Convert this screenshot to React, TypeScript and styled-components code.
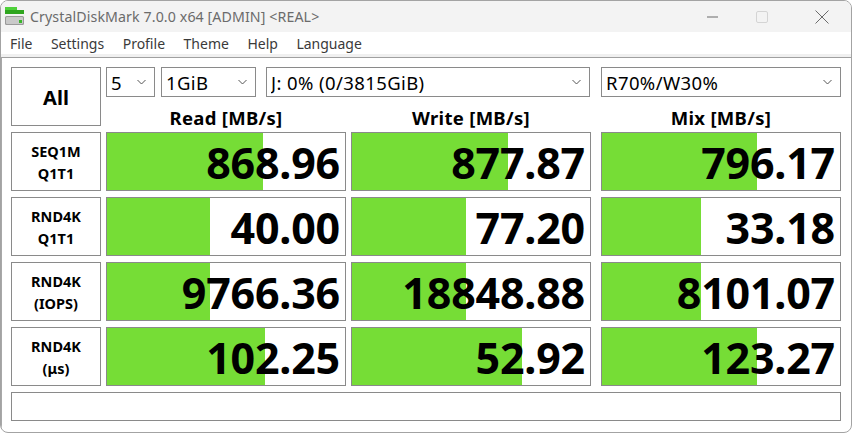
import React from 'react';
import styled, { createGlobalStyle } from 'styled-components';

const GlobalStyle = createGlobalStyle`
  html, body {
    margin: 0;
    padding: 0;
    background: #ffffff;
  }
  * {
    box-sizing: border-box;
  }
`;

const Window = styled.div`
  width: 852px;
  height: 433px;
  border: 1px solid #a3a3a3;
  border-radius: 8px;
  overflow: hidden;
  background: #ffffff;
  display: flex;
  flex-direction: column;
  font-family: 'Noto Sans', 'Open Sans', sans-serif;
`;

const TitleBar = styled.div`
  height: 31px;
  flex-shrink: 0;
  background: #f3f3f3;
  display: flex;
  align-items: center;
  padding-left: 3px;
`;

const TitleText = styled.span`
  margin-left: 5px;
  font-size: 14.2px;
  letter-spacing: 0.1px;
  color: #6b6b6b;
`;

const Controls = styled.div`
  margin-left: auto;
  display: flex;
  align-items: center;
  height: 100%;
`;

const ControlButton = styled.div<{ w: number }>`
  width: ${p => p.w}px;
  height: 100%;
  display: flex;
  align-items: center;
  justify-content: center;
`;

const MenuBar = styled.div`
  height: 25px;
  flex-shrink: 0;
  background: #ffffff;
  border-bottom: 3px solid #f0f0f0;
  display: flex;
  align-items: center;
  padding: 2px 0 0 9px;
`;

const MenuItem = styled.span`
  font-size: 14px;
  color: #3a3a3a;
  margin-right: 18.5px;
  line-height: 20px;
`;

const Content = styled.div`
  flex: 1;
  border-top: 1px solid #a0a0a0;
  border-left: 1px solid #a8a8a8;
  padding: 9px 0 0 9px;
`;

const Grid = styled.div`
  display: grid;
  grid-template-columns: 90px 240px 240px 245px;
  grid-template-rows: 30px 23px repeat(4, 59px) 29px;
  column-gap: 5px;
  row-gap: 6px;
  width: 830px;
`;

const AllButton = styled.div`
  grid-column: 1;
  grid-row: 1 / span 2;
  border: 1px solid #8a8a8a;
  background: #ffffff;
  display: flex;
  align-items: center;
  justify-content: center;
  font-size: 20px;
  font-weight: 700;
  color: #000;
  padding-top: 2px;
`;

const ComboRow = styled.div`
  grid-column: 2 / span 3;
  grid-row: 1;
  display: flex;
`;

const Combo = styled.div<{ w: number; gapLeft: number }>`
  width: ${p => p.w}px;
  margin-left: ${p => p.gapLeft}px;
  height: 30px;
  border: 1px solid #8a8a8a;
  background: #ffffff;
  display: flex;
  align-items: center;
  padding: 0 8px 0 4px;
  font-size: 18.5px;
  letter-spacing: 0.4px;
  color: #000;
`;

const ComboText = styled.span`
  flex: 1;
  white-space: nowrap;
  overflow: hidden;
`;

const Header = styled.div<{ col: number }>`
  grid-column: ${p => p.col};
  grid-row: 2;
  display: flex;
  align-items: flex-end;
  justify-content: center;
  font-size: 18.5px;
  font-weight: 700;
  letter-spacing: 0.3px;
  line-height: 1;
  color: #000;
  margin-bottom: -1px;
  padding-left: ${p => (p.col === 4 ? 5 : 0)}px;
`;

const LabelCell = styled.div<{ row: number }>`
  grid-column: 1;
  grid-row: ${p => p.row};
  border: 1px solid #8a8a8a;
  background: #ffffff;
  display: flex;
  flex-direction: column;
  align-items: center;
  justify-content: center;
  font-size: 14.5px;
  font-weight: 700;
  line-height: 22px;
  color: #000;
`;

const ValueCell = styled.div<{ row: number; col: number }>`
  grid-column: ${p => p.col};
  grid-row: ${p => p.row};
  justify-self: end;
  width: 240px;
  position: relative;
  border: 1px solid #8a8a8a;
  background: #ffffff;
  display: flex;
  align-items: center;
  justify-content: flex-end;
  padding: 2px 5px 0 0;
  overflow: hidden;
`;

const Bar = styled.div`
  position: absolute;
  left: 0;
  top: 0;
  bottom: 0;
  background: #76dd36;
`;

const Value = styled.span`
  position: relative;
  font-size: 43px;
  font-weight: 700;
  line-height: 1;
  color: #000;
  letter-spacing: -0.2px;
`;

const StatusBar = styled.div`
  grid-column: 1 / span 4;
  grid-row: 7;
  width: 830px;
  border: 1px solid #8a8a8a;
  background: #ffffff;
`;

const Chevron = () => (
  <svg width="9" height="6" viewBox="0 0 9 6">
    <path d="M0.5 1 L4.5 5 L8.5 1" fill="none" stroke="#555" strokeWidth="1" />
  </svg>
);

const AppIcon = () => (
  <svg width="21" height="21" viewBox="0 0 21 21">
    <rect x="1" y="1" width="12" height="3" fill="#4fd13b" />
    <rect x="1" y="4" width="19" height="4" fill="#2fa51f" />
    <rect x="1" y="10" width="19" height="9" rx="1.5" fill="#9a9a9a" />
    <rect x="2" y="11" width="17" height="7" rx="1" fill="#c9c9c9" />
    <rect x="15" y="14" width="3" height="3" fill="#39b62a" />
  </svg>
);

const combos = [
  { text: '5', w: 49, gap: 0 },
  { text: '1GiB', w: 95, gap: 6 },
  { text: 'J: 0% (0/3815GiB)', w: 324, gap: 10 },
  { text: 'R70%/W30%', w: 240, gap: 11 },
];

const headers = ['Read [MB/s]', 'Write [MB/s]', 'Mix [MB/s]'];

const rows: { label: [string, string]; values: [string, number][] }[] = [
  { label: ['SEQ1M', 'Q1T1'], values: [['868.96', 156], ['877.87', 156], ['796.17', 155]] },
  { label: ['RND4K', 'Q1T1'], values: [['40.00', 103], ['77.20', 114], ['33.18', 99]] },
  { label: ['RND4K', '(IOPS)'], values: [['9766.36', 103], ['18848.88', 114], ['8101.07', 99]] },
  { label: ['RND4K', '(μs)'], values: [['102.25', 158], ['52.92', 170], ['123.27', 155]] },
];

const menus = ['File', 'Settings', 'Profile', 'Theme', 'Help', 'Language'];

export default function App() {
  return (
    <>
      <GlobalStyle />
      <Window>
        <TitleBar>
          <AppIcon />
          <TitleText>CrystalDiskMark 7.0.0 x64 [ADMIN] &lt;REAL&gt;</TitleText>
          <Controls>
            <ControlButton w={38}>
              <svg width="11" height="2" viewBox="0 0 11 2">
                <rect x="0" y="0.5" width="11" height="1" fill="#6a6a6a" />
              </svg>
            </ControlButton>
            <ControlButton w={62}>
              <svg width="12" height="12" viewBox="0 0 12 12">
                <rect x="0.5" y="0.5" width="11" height="11" rx="1.5" fill="none" stroke="#d4d4d4" />
              </svg>
            </ControlButton>
            <ControlButton w={58}>
              <svg width="14" height="14" viewBox="0 0 14 14">
                <path d="M0.5 0.5 L13.5 13.5 M13.5 0.5 L0.5 13.5" stroke="#6a6a6a" strokeWidth="1" />
              </svg>
            </ControlButton>
          </Controls>
        </TitleBar>
        <MenuBar>
          {menus.map(m => (
            <MenuItem key={m}>{m}</MenuItem>
          ))}
        </MenuBar>
        <Content>
          <Grid>
            <AllButton>All</AllButton>
            <ComboRow>
              {combos.map(c => (
                <Combo key={c.text} w={c.w} gapLeft={c.gap}>
                  <ComboText>{c.text}</ComboText>
                  <Chevron />
                </Combo>
              ))}
            </ComboRow>
            {headers.map((h, i) => (
              <Header key={h} col={i + 2}>{h}</Header>
            ))}
            {rows.map((r, ri) => (
              <React.Fragment key={ri}>
                <LabelCell row={ri + 3}>
                  <span>{r.label[0]}</span>
                  <span>{r.label[1]}</span>
                </LabelCell>
                {r.values.map(([v, fill], ci) => (
                  <ValueCell key={ci} row={ri + 3} col={ci + 2}>
                    <Bar style={{ width: fill }} />
                    <Value>{v}</Value>
                  </ValueCell>
                ))}
              </React.Fragment>
            ))}
            <StatusBar />
          </Grid>
        </Content>
      </Window>
    </>
  );
}
